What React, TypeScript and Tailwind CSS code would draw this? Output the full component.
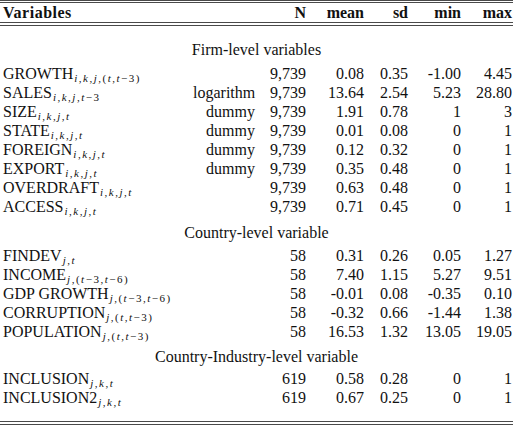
const firm = [
  ["GROWTH", "i,k,j,(t,t−3)", "", "9,739", "0.08", "0.35", "-1.00", "4.45"],
  ["SALES", "i,k,j,t−3", "logarithm", "9,739", "13.64", "2.54", "5.23", "28.80"],
  ["SIZE", "i,k,j,t", "dummy", "9,739", "1.91", "0.78", "1", "3"],
  ["STATE", "i,k,j,t", "dummy", "9,739", "0.01", "0.08", "0", "1"],
  ["FOREIGN", "i,k,j,t", "dummy", "9,739", "0.12", "0.32", "0", "1"],
  ["EXPORT", "i,k,j,t", "dummy", "9,739", "0.35", "0.48", "0", "1"],
  ["OVERDRAFT", "i,k,j,t", "", "9,739", "0.63", "0.48", "0", "1"],
  ["ACCESS", "i,k,j,t", "", "9,739", "0.71", "0.45", "0", "1"],
];

const country = [
  ["FINDEV", "j,t", "", "58", "0.31", "0.26", "0.05", "1.27"],
  ["INCOME", "j,(t−3,t−6)", "", "58", "7.40", "1.15", "5.27", "9.51"],
  ["GDP GROWTH", "j,(t−3,t−6)", "", "58", "-0.01", "0.08", "-0.35", "0.10"],
  ["CORRUPTION", "j,(t,t−3)", "", "58", "-0.32", "0.66", "-1.44", "1.38"],
  ["POPULATION", "j,(t,t−3)", "", "58", "16.53", "1.32", "13.05", "19.05"],
];

const industry = [
  ["INCLUSION", "j,k,t", "", "619", "0.58", "0.28", "0", "1"],
  ["INCLUSION2", "j,k,t", "", "619", "0.67", "0.25", "0", "1"],
];

const cols = "grid grid-cols-[190px_62px_51px_58px_44px_53px_51px] pl-[3px]";

// math subscript: letters italic, punctuation and digits upright
function Sub({ s }: { s: string }) {
  return (
    <span className="relative top-[3px] ml-px text-[11px] leading-none tracking-[1.5px]">
      {[...s].map((c, i) =>
        /[a-z]/.test(c) ? (
          <i key={i}>{c}</i>
        ) : (
          <span key={i}>{c}</span>
        )
      )}
    </span>
  );
}

function Row({ r }: { r: string[] }) {
  return (
    <div className={cols + " h-[19px] leading-[19px]"}>
      <div className="whitespace-nowrap">
        {r[0]}
        <Sub s={r[1]} />
      </div>
      {r.slice(2).map((v, i) => (
        <div key={i} className="text-right">
          {v}
        </div>
      ))}
    </div>
  );
}

function Rule() {
  return <div className="h-px bg-[#4a4a4a]" />;
}

function Section({ title, mt }: { title: string; mt: string }) {
  return (
    <div className={"h-[19px] leading-[19px] text-center " + mt}>{title}</div>
  );
}

export default function App() {
  return (
    <div className="w-[513px] h-[426px] bg-white text-[#111] text-[16px] font-['Liberation_Serif',serif] overflow-hidden">
      <Rule />
      <div className="mt-px">
        <Rule />
      </div>
      <div className={cols + " h-[19px] leading-[19px] font-bold"}>
        <div className="col-span-2 tracking-[0.5px]">Variables</div>
        <div className="text-right">N</div>
        <div className="text-right">mean</div>
        <div className="text-right">sd</div>
        <div className="text-right">min</div>
        <div className="text-right">max</div>
      </div>
      <Rule />
      <div className="mt-[2px]">
        <Rule />
      </div>

      <Section title="Firm-level variables" mt="mt-[14px]" />
      <div className="mt-[5px]">
        {firm.map((r) => (
          <Row key={r[0]} r={r} />
        ))}
      </div>

      <Section title="Country-level variable" mt="mt-[7px]" />
      <div className="mt-[4px]">
        {country.map((r) => (
          <Row key={r[0]} r={r} />
        ))}
      </div>

      <Section title="Country-Industry-level variable" mt="mt-[6px]" />
      <div className="mt-[3px]">
        {industry.map((r) => (
          <Row key={r[0]} r={r} />
        ))}
      </div>

      <div className="mt-[14px]">
        <Rule />
      </div>
      <div className="mt-[2px]">
        <Rule />
      </div>
    </div>
  );
}
